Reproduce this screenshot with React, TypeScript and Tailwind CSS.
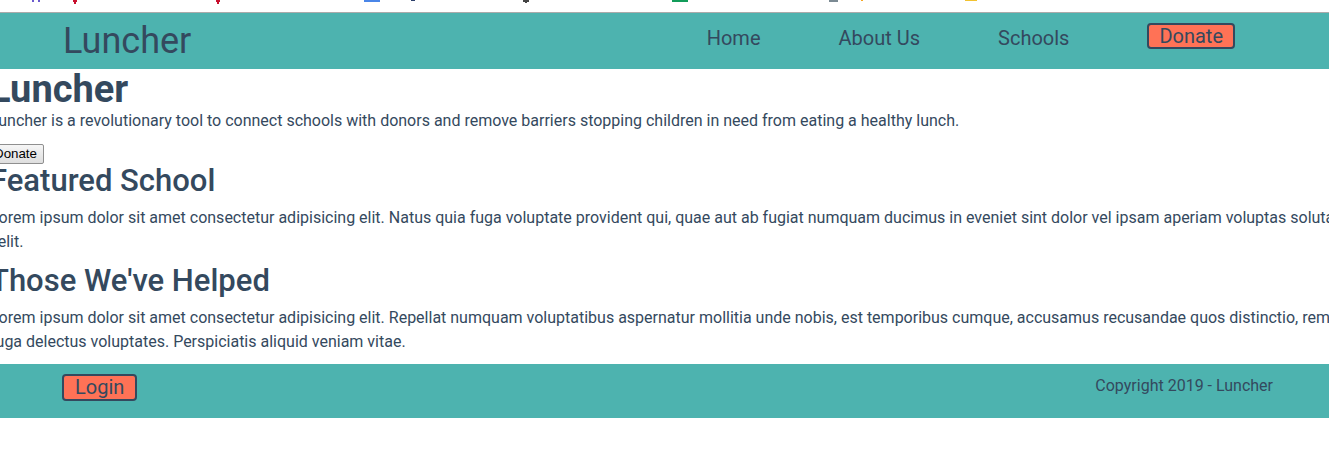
export default function App() {
  const p2 =
    'Lorem ipsum dolor sit amet consectetur adipisicing elit. Natus quia fuga voluptate provident qui, quae aut ab fugiat numquam ducimus in eveniet sint dolor vel ipsam aperiam voluptas soluta velit.';
  const p3 =
    'Lorem ipsum dolor sit amet consectetur adipisicing elit. Repellat numquam voluptatibus aspernatur mollitia unde nobis, est temporibus cumque, accusamus recusandae quos distinctio, rem fuga delectus voluptates. Perspiciatis aliquid veniam vitae.';

  return (
    <div className="w-full min-h-[463px] overflow-hidden bg-white text-[#34495e] font-['Roboto',sans-serif]">
      {/* bookmark bar leftovers */}
      <div className="h-[12px]">
        <svg width="1329" height="12" className="block">
          <rect x="32" y="0" width="2" height="2" fill="#6a5acd" />
          <rect x="38" y="0" width="2" height="2" fill="#6a5acd" />
          <rect x="73" y="0" width="4" height="2" fill="#c8102e" />
          <rect x="74" y="2" width="2" height="2" fill="#c8102e" />
          <rect x="216" y="0" width="4" height="2" fill="#c8102e" />
          <rect x="217" y="2" width="2" height="2" fill="#c8102e" />
          <rect x="364" y="0" width="16" height="2" fill="#4a86e8" />
          <rect x="411" y="0" width="4" height="1" fill="#2d3f6b" />
          <rect x="523" y="0" width="6" height="2" fill="#444" />
          <rect x="525" y="2" width="2" height="1" fill="#444" />
          <rect x="672" y="0" width="16" height="2" fill="#129c5a" />
          <rect x="829" y="0" width="9" height="2" fill="#7b8a93" />
          <rect x="861" y="0" width="2" height="1" fill="#f5a623" />
          <rect x="965" y="0" width="12" height="1" fill="#f2c230" />
        </svg>
      </div>

      <header className="h-[57px] border-t border-[#ababab] bg-[#4db3af] flex items-start justify-between pl-[63px] pr-[94px]">
        <div className="text-[36px] leading-[42px] mt-[7px]">Luncher</div>
        <nav className="flex items-start gap-[78px] pt-[10px]">
          <a className="text-[20px] leading-[24px] mt-[3px]">Home</a>
          <a className="text-[20px] leading-[24px] mt-[3px]">About Us</a>
          <a className="text-[20px] leading-[24px] mt-[3px]">Schools</a>
          <button className="h-[26px] px-[10px] text-[20px] leading-[19px] bg-[#ff7256] border-2 border-[#34495e] rounded-[4px]">
            Donate
          </button>
        </nav>
      </header>

      <main className="ml-[-10px] w-[1352px]">
        <h1 className="text-[38px] font-bold leading-[36px] mt-[2px]">Luncher</h1>
        <p className="text-[16px] leading-[24px] mt-[2px]">
          Luncher is a revolutionary tool to connect schools with donors and remove barriers stopping children in need from eating a healthy lunch.
        </p>
        <button className="block mt-[11px] ml-[-3px] h-[20px] px-[6px] border border-[#8f8f8f] rounded-[2px] text-black text-[13.33px] leading-[16px] font-['Liberation_Sans',sans-serif] bg-gradient-to-b from-[#f6f6f6] to-[#dedede]">
          Donate
        </button>
        <h2 className="text-[31px] font-medium leading-[36px] -mt-px">Featured School</h2>
        <p className="text-[16px] leading-[24px] mt-[7px]">{p2}</p>
        <h2 className="text-[31px] font-medium leading-[36px] mt-[9px]">Those We've Helped</h2>
        <p className="text-[16px] leading-[24px] mt-[7px]">{p3}</p>
      </main>

      <footer className="mt-[10px] h-[54px] bg-[#4db3af] flex items-start justify-between pl-[62px] pr-[56px] pt-[10px]">
        <button className="h-[27px] px-[11px] text-[20px] leading-[21px] bg-[#ff7256] border-2 border-[#34495e] rounded-[4px]">
          Login
        </button>
        <p className="text-[16px] leading-[24px]">Copyright 2019 - Luncher</p>
      </footer>
    </div>
  );
}
